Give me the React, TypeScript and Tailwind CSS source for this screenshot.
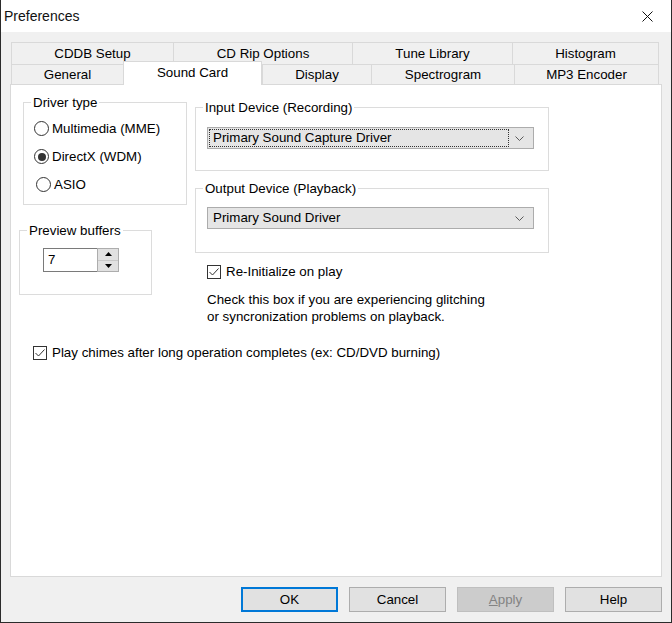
import React from 'react';

const GroupBox: React.FC<{ label: string; className?: string; children?: React.ReactNode }> = ({ label, className = '', children }) => (
  <div className={`relative border border-[#dcdcdc] ${className}`}>
    <span className="absolute -top-[9px] left-[7px] bg-white px-[2px] leading-[17px] whitespace-nowrap">{label}</span>
    {children}
  </div>
);

const Radio: React.FC<{ label: string; checked?: boolean; className?: string }> = ({ label, checked, className = '' }) => (
  <div className={`flex items-center h-[17px] ${className}`}>
    <span className="w-[15px] h-[15px] rounded-full border border-[#333333] bg-white flex items-center justify-center shrink-0">
      {checked && <span className="w-[8px] h-[8px] rounded-full bg-[#333333]" />}
    </span>
    <span className="ml-[3px]">{label}</span>
  </div>
);

const CheckBox: React.FC<{ label: string; className?: string }> = ({ label, className = '' }) => (
  <div className={`flex items-center h-[17px] ${className}`}>
    <span className="w-[14px] h-[14px] border border-[#333333] bg-white flex items-center justify-center shrink-0">
      <svg width="12" height="12" viewBox="0 0 12 12" fill="none">
        <path d="M1.5 6 L4.5 9 L10.5 2.5" stroke="#333333" strokeWidth="1" />
      </svg>
    </span>
    <span className="ml-[5px]">{label}</span>
  </div>
);

const Chevron = () => (
  <svg width="9" height="5" viewBox="0 0 9 5" fill="none">
    <path d="M0.5 0.5 L4.5 4.5 L8.5 0.5" stroke="#5a5a5a" strokeWidth="1" />
  </svg>
);

const Select: React.FC<{ value: string; focused?: boolean }> = ({ value, focused }) => (
  <div className="w-[327px] h-[22px] border border-[#acacac] bg-[#e5e5e5] flex items-center">
    <div className={`flex-1 h-[18px] ml-[1px] mr-[4px] flex items-center pl-[3px] border ${focused ? 'border-dotted border-[#333333]' : 'border-transparent'}`}>
      {value}
    </div>
    <div className="w-[12px] mr-[8px] flex justify-center">
      <Chevron />
    </div>
  </div>
);

const App: React.FC = () => {
  const row1 = [
    { label: 'CDDB Setup', w: 'w-[162px]' },
    { label: 'CD Rip Options', w: 'w-[179px]' },
    { label: 'Tune Library', w: 'w-[160px]' },
    { label: 'Histogram', w: 'w-[147px]' },
  ];
  const row2 = [
    { label: 'General', w: 'w-[112px]' },
    { label: 'Sound Card', w: 'w-[139px]', active: true },
    { label: 'Display', w: 'w-[109px]' },
    { label: 'Spectrogram', w: 'w-[143px]' },
    { label: 'MP3 Encoder', w: 'w-[145px]' },
  ];

  return (
    <div className="w-[672px] h-[623px] flex flex-col border-x border-b border-[#2b2b2b] bg-[#f0f0f0] text-black text-[13.33px] font-['Liberation_Sans',Arial,sans-serif]">
      {/* title bar */}
      <div className="h-[32px] bg-white flex items-center justify-between shrink-0">
        <span className="pl-[3px] text-[14px] text-[#111111]">Preferences</span>
        <div className="w-[46px] h-[32px] flex items-center justify-center mr-[1px]">
          <svg width="11" height="11" viewBox="0 0 11 11" fill="none">
            <path d="M0.5 0.5 L10.5 10.5 M10.5 0.5 L0.5 10.5" stroke="#111111" strokeWidth="1" />
          </svg>
        </div>
      </div>

      <div className="flex-1 flex flex-col pt-[10px] px-[9px]">
        {/* tabs */}
        <div className="ml-[1px]">
          <div className="flex h-[22px]">
            {row1.map((t, i) => (
              <div
                key={t.label}
                className={`${t.w} h-full border-t border-l border-[#d9d9d9] flex items-center justify-center ${i === row1.length - 1 ? 'border-r' : ''}`}
              >
                {t.label}
              </div>
            ))}
          </div>
          <div className="flex items-end h-[20px]">
            {row2.map((t, i) =>
              t.active ? (
                <div
                  key={t.label}
                  className={`${t.w} relative z-10 h-[24px] -mb-px bg-white border-x border-t border-[#d9d9d9] flex items-center justify-center pb-[1px]`}
                >
                  {t.label}
                </div>
              ) : (
                <div
                  key={t.label}
                  className={`${t.w} h-[20px] border-t border-l border-[#d9d9d9] flex items-center justify-center ${i === row2.length - 1 ? 'border-r' : ''}`}
                >
                  {t.label}
                </div>
              )
            )}
          </div>
        </div>

        {/* panel */}
        <div className="h-[493px] bg-white border border-[#d9d9d9]">
          <div className="flex">
            <div className="w-[184px] shrink-0">
              <GroupBox label="Driver type" className="ml-[12px] mt-[17px] w-[164px] h-[103px]">
                <div className="flex flex-col gap-[11px] pt-[17px] pl-[10px]">
                  <Radio label="Multimedia (MME)" />
                  <Radio label="DirectX (WDM)" checked />
                  <Radio label="ASIO" className="ml-[2px]" />
                </div>
              </GroupBox>

              <GroupBox label="Preview buffers" className="ml-[8px] mt-[25px] w-[133px] h-[65px]">
                <div className="pl-[23px] pt-[17px]">
                  <div className="flex w-[76px] h-[24px] border border-[#7a7a7a] bg-white">
                    <div className="flex-1 flex items-center pl-[4px]">7</div>
                    <div className="w-[22px] flex flex-col my-[-1px] mr-[-1px] border border-[#adadad]">
                      <div className="flex-1 bg-[#e1e1e1] border-b border-[#c8c8c8] flex items-center justify-center">
                        <svg width="7" height="4" viewBox="0 0 7 4"><path d="M3.5 0 L7 4 L0 4 Z" fill="#000" /></svg>
                      </div>
                      <div className="flex-1 bg-[#e1e1e1] flex items-center justify-center">
                        <svg width="7" height="4" viewBox="0 0 7 4"><path d="M0 0 L7 0 L3.5 4 Z" fill="#000" /></svg>
                      </div>
                    </div>
                  </div>
                </div>
              </GroupBox>
            </div>

            <div>
              <GroupBox label="Input Device (Recording)" className="mt-[22px] w-[354px] h-[64px]">
                <div className="pl-[11px] pt-[19px]">
                  <Select value="Primary Sound Capture Driver" focused />
                </div>
              </GroupBox>

              <GroupBox label="Output Device (Playback)" className="mt-[17px] w-[354px] h-[65px]">
                <div className="pl-[11px] pt-[18px]">
                  <Select value="Primary Sound Driver" />
                </div>
              </GroupBox>

              <CheckBox label="Re-Initialize on play" className="ml-[12px] mt-[10px]" />

              <p className="ml-[12px] mt-[11px] leading-[17px]">
                Check this box if you are experiencing glitching
                <br />
                or syncronization problems on playback.
              </p>
            </div>
          </div>

          <CheckBox label="Play chimes after long operation completes (ex: CD/DVD burning)" className="ml-[22px] mt-[19px]" />
        </div>

        {/* buttons */}
        <div className="flex justify-end gap-[11px] mt-[10px]">
          <button className="w-[97px] h-[25px] bg-[#e1e1e1] border-2 border-[#0078d7]">OK</button>
          <button className="w-[97px] h-[25px] bg-[#e1e1e1] border border-[#adadad]">Cancel</button>
          <button className="w-[97px] h-[25px] bg-[#cccccc] border border-[#bfbfbf] text-[#838383]">
            <span className="underline">A</span>pply
          </button>
          <button className="w-[97px] h-[25px] bg-[#e1e1e1] border border-[#adadad]">Help</button>
        </div>
      </div>
    </div>
  );
};

export default App;
